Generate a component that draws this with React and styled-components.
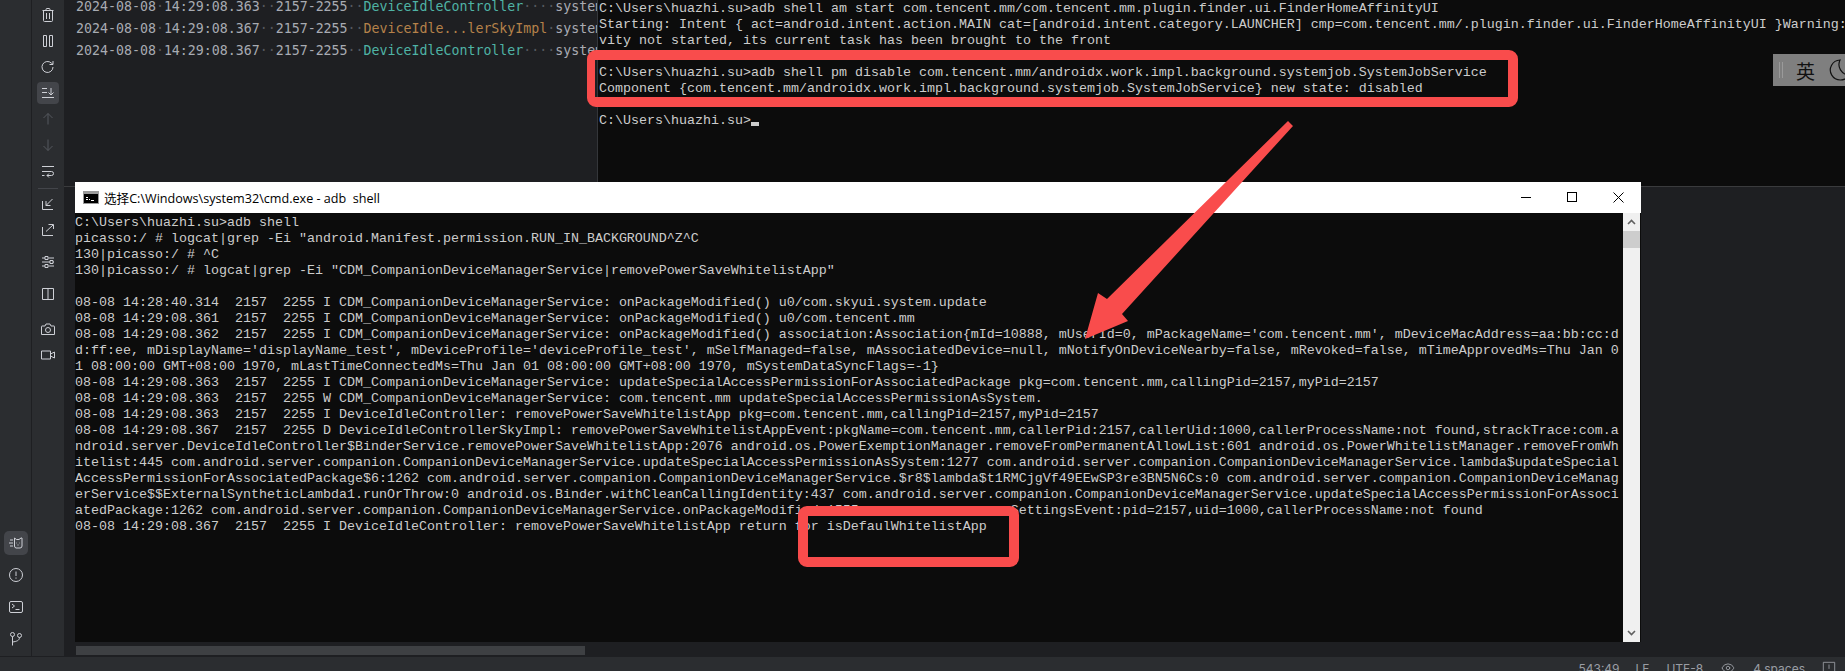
import React from 'react'
import styled, { createGlobalStyle } from 'styled-components'
import { Eye } from 'lucide-react'

const GlobalStyle = createGlobalStyle`
html, body {
  margin: 0;
  padding: 0;
  background: #1e1f22;
  overflow: hidden;
}
`
const Page = styled.div`
position: relative;
width: 1845px;
height: 671px;
display: flex;
flex-direction: column;
overflow: hidden;
background: #1e1f22;
`
const Main = styled.div`
flex: 1;
min-height: 0;
display: flex;
`
const Stripe = styled.div`
width: 31px;
border-right: 1px solid #1e1f22;
background: #2b2d30;
display: flex;
flex-direction: column;
align-items: center;
justify-content: flex-end;
gap: 8px;
padding-bottom: 5px;
`
const StripeButton = styled.div`
width: 24px;
height: 24px;
border-radius: 5px;
display: flex;
align-items: center;
justify-content: center;
background: ${({ $active }) => ($active ? '#43454a' : 'transparent')};
`
const Toolbar = styled.div`
width: 32px;
background: #2b2d30;
display: flex;
flex-direction: column;
align-items: center;
padding-top: 4px;
`
const ToolButton = styled.div`
width: 22px;
height: 22px;
flex: none;
margin-top: ${({ $gap }) => $gap || 0}px;
margin-bottom: 4px;
border-radius: 4px;
display: flex;
align-items: center;
justify-content: center;
background: ${({ $active }) => ($active ? '#43454a' : 'transparent')};
`
const ToolDivider = styled.div`
width: 20px;
height: 1px;
flex: none;
margin: 2px 0 4px;
background: #43454a;
`
const Content = styled.div`
flex: 1;
min-width: 0;
display: flex;
flex-direction: column;
`
const TopRow = styled.div`
height: 187px;
display: flex;
border-bottom: 1px solid #3a3b3d;
box-sizing: border-box;
`
const LogPane = styled.div`
width: 533px;
flex: none;
overflow: hidden;
padding-left: 12px;
box-sizing: border-box;
`
const LogList = styled.div`
margin-top: -4px;
`
const LogRow = styled.div`
height: 22px;
line-height: 22px;
font-family: "DejaVu Sans Mono", monospace;
font-size: 13.28px;
white-space: pre;
color: #a8abb2;
`
const Tag = styled.span`
color: ${({ $debug }) => ($debug ? '#b5824a' : '#4fb3a5')};
`
const Dots = styled.span`
color: #55585e;
`
const TopTerminal = styled.div`
flex: 1;
min-width: 0;
overflow: hidden;
border-left: 1px solid #34363a;
padding: 1px 0 0 1px;
background: #0c0c0c;
`
const TermText = styled.div`
font-family: "Liberation Mono", monospace;
font-size: 13.33px;
line-height: 16px;
color: #cccccc;
white-space: pre;
`
const Caret = styled.span`
display: inline-block;
width: 8px;
height: 4px;
background: #cccccc;
vertical-align: -2px;
`
const HScroll = styled.div`
width: 509px;
height: 9px;
margin: auto 0 1px 12px;
background: #3e4043;
`
const StatusBar = styled.div`
height: 15px;
flex: none;
box-sizing: border-box;
border-top: 1px solid #1e1f22;
background: #2b2d30;
display: flex;
justify-content: flex-end;
align-items: flex-start;
padding: 4px 9px 0 0;
overflow: hidden;
font-family: "Inter", sans-serif;
font-size: 12px;
line-height: 16px;
color: #9a9da4;
`
const StatusItem = styled.span`
margin-right: ${({ $gap }) => $gap}px;
white-space: nowrap;
display: flex;
`
const CmdWindow = styled.div`
position: absolute;
left: 75px;
top: 182px;
width: 1566px;
height: 460px;
display: flex;
flex-direction: column;
background: #0c0c0c;
`
const TitleBar = styled.div`
height: 31px;
flex: none;
background: #ffffff;
display: flex;
align-items: center;
padding-left: 8px;
`
const TitleText = styled.span`
margin-left: 5px;
flex: 1;
font-family: "Open Sans", "Noto Sans CJK SC", sans-serif;
font-size: 12.6px;
color: #000000;
white-space: pre;
`
const WindowButton = styled.div`
width: 46px;
height: 31px;
display: flex;
align-items: center;
justify-content: center;
`
const CmdBody = styled.div`
flex: 1;
min-height: 0;
display: flex;
`
const CmdText = styled(TermText)`
flex: 1;
min-width: 0;
overflow: hidden;
padding-top: 2px;
`
const Track = styled.div`
width: 17px;
margin-right: 1px;
background: #f0f0f0;
display: flex;
flex-direction: column;
align-items: center;
`
const TrackArrow = styled.div`
height: 18px;
flex: none;
display: flex;
align-items: center;
justify-content: center;
`
const Thumb = styled.div`
width: 100%;
height: 17px;
background: #cdcdcd;
margin-bottom: auto;
`
const Callout = styled.div`
position: absolute;
box-sizing: border-box;
border: 10px solid #f94c4c;
border-radius: 9px;
`
const DisableCallout = styled(Callout)`
left: 587px;
top: 50px;
width: 931px;
height: 57px;
border-left-width: 8px;
`
const ResultCallout = styled(Callout)`
left: 798px;
top: 506px;
width: 221px;
height: 61px;
`
const ArrowLayer = styled.svg`
position: absolute;
left: 0;
top: 0;
pointer-events: none;
`
const ImeBar = styled.div`
position: absolute;
left: 1773px;
top: 54px;
width: 72px;
height: 32px;
background: #7f7f7f;
display: flex;
align-items: center;
overflow: hidden;
padding-left: 6px;
box-sizing: border-box;
`
const ImeGrip = styled.div`
width: 2px;
height: 16px;
border-left: 1px solid #9a9a9a;
border-right: 1px solid #9a9a9a;
flex: none;
`
const ImeGlyph = styled.span`
margin: 0 12px 0 13px;
flex: none;
font-family: "Noto Sans CJK SC", sans-serif;
font-size: 19px;
color: #111111;
`
const ImeMoon = styled.svg`
flex: none;
`

const Ico = ({ d, color = '#ced0d6', size = 16 }) => (
  <svg width={size} height={size} viewBox="0 0 16 16" fill="none" stroke={color} strokeWidth="1">
    <path d={d} />
  </svg>
)

const TOOLS = [
  { d: 'M2.5 3.5h11M6 3.5v-1a1 1 0 0 1 1-1h2a1 1 0 0 1 1 1v1M3.5 3.5v10a1 1 0 0 0 1 1h7a1 1 0 0 0 1-1v-10M6.5 6v6M9.5 6v6' },
  { d: 'M3.5 2.5h3v11h-3zM9.5 2.5h3v11h-3z' },
  { d: 'M13 8a5.5 5.5 0 1 1-1.6-3.9L13 5.5M13 2v3.5H9.5' },
  { d: 'M2 3.5h5M2 7.5h5M2 12.5h12M11 3v7M8.5 7.5 11 10l2.5-2.5', active: true },
  { d: 'M8 13.5v-11M3.5 7 8 2.5 12.5 7', off: true },
  { d: 'M8 2.5v11M3.5 9 8 13.5 12.5 9', off: true },
  { d: 'M2 3.5h12M2 8.5h9.5a2 2 0 0 1 0 4H7M2 12.5h2.5M9 10.5l-2 2 2 2' },
  { divider: true },
  { d: 'M2.5 5v8.5H13M12.5 3 6 9.5M6 5v4.5h4.5' },
  { d: 'M2.5 5v8.5H13M6 9.5 13 3M8.5 2.5h5V7' },
  { gap: 6, d: 'M2 4h3M8.5 4H14M2 8h8M13 8h1M2 12h3M8.5 12H14M5 2.5h3v3H5zM10 6.5h3v3h-3zM5 10.5h3v3H5z' },
  { gap: 6, d: 'M2.5 2.5h11v11h-11zM8 2.5v11' },
  { gap: 9, d: 'M2 5h3l1-2h4l1 2h3a.5.5 0 0 1 .5.5v8H1.5v-8A.5.5 0 0 1 2 5zM10.5 9a2.5 2.5 0 1 1-5 0 2.5 2.5 0 0 1 5 0z' },
  { d: 'M1.5 4h9v8h-9zM10.5 7l4-2v6l-4-2' },
]

const LOG_ROWS = [
  { time: '14:29:08.363', tag: 'DeviceIdleController', tail: '····' },
  { time: '14:29:08.367', tag: 'DeviceIdle...lerSkyImpl', tail: '·', debug: true },
  { time: '14:29:08.367', tag: 'DeviceIdleController', tail: '····' },
]

const TOP_LINES = [
  'C:\\Users\\huazhi.su>adb shell am start com.tencent.mm/com.tencent.mm.plugin.finder.ui.FinderHomeAffinityUI',
  'Starting: Intent { act=android.intent.action.MAIN cat=[android.intent.category.LAUNCHER] cmp=com.tencent.mm/.plugin.finder.ui.FinderHomeAffinityUI }Warning: Acti',
  'vity not started, its current task has been brought to the front',
  ' ',
  'C:\\Users\\huazhi.su>adb shell pm disable com.tencent.mm/androidx.work.impl.background.systemjob.SystemJobService',
  'Component {com.tencent.mm/androidx.work.impl.background.systemjob.SystemJobService} new state: disabled',
  ' ',
]

const P = '08-08 14:29:08.'
const CDM = 'CDM_CompanionDeviceManagerService:'

const CMD_LINES = [
  'C:\\Users\\huazhi.su>adb shell',
  'picasso:/ # logcat|grep -Ei "android.Manifest.permission.RUN_IN_BACKGROUND^Z^C',
  '130|picasso:/ # ^C',
  '130|picasso:/ # logcat|grep -Ei "CDM_CompanionDeviceManagerService|removePowerSaveWhitelistApp"',
  ' ',
  `08-08 14:28:40.314  2157  2255 I ${CDM} onPackageModified() u0/com.skyui.system.update`,
  `${P}361  2157  2255 I ${CDM} onPackageModified() u0/com.tencent.mm`,
  `${P}362  2157  2255 I ${CDM} onPackageModified() association:Association{mId=10888, mUserId=0, mPackageName='com.tencent.mm', mDeviceMacAddress=aa:bb:cc:d`,
  "d:ff:ee, mDisplayName='displayName_test', mDeviceProfile='deviceProfile_test', mSelfManaged=false, mAssociatedDevice=null, mNotifyOnDeviceNearby=false, mRevoked=false, mTimeApprovedMs=Thu Jan 0",
  '1 08:00:00 GMT+08:00 1970, mLastTimeConnectedMs=Thu Jan 01 08:00:00 GMT+08:00 1970, mSystemDataSyncFlags=-1}',
  `${P}363  2157  2255 I ${CDM} updateSpecialAccessPermissionForAssociatedPackage pkg=com.tencent.mm,callingPid=2157,myPid=2157`,
  `${P}363  2157  2255 W ${CDM} com.tencent.mm updateSpecialAccessPermissionAsSystem.`,
  `${P}363  2157  2255 I DeviceIdleController: removePowerSaveWhitelistApp pkg=com.tencent.mm,callingPid=2157,myPid=2157`,
  `${P}367  2157  2255 D DeviceIdleControllerSkyImpl: removePowerSaveWhitelistAppEvent:pkgName=com.tencent.mm,callerPid:2157,callerUid:1000,callerProcessName:not found,strackTrace:com.a`,
  'ndroid.server.DeviceIdleController$BinderService.removePowerSaveWhitelistApp:2076 android.os.PowerExemptionManager.removeFromPermanentAllowList:601 android.os.PowerWhitelistManager.removeFromWh',
  'itelist:445 com.android.server.companion.CompanionDeviceManagerService.updateSpecialAccessPermissionAsSystem:1277 com.android.server.companion.CompanionDeviceManagerService.lambda$updateSpecial',
  'AccessPermissionForAssociatedPackage$6:1262 com.android.server.companion.CompanionDeviceManagerService.$r8$lambda$t1RMCjgVf49EEwSP3re3BN5N6Cs:0 com.android.server.companion.CompanionDeviceManag',
  'erService$$ExternalSyntheticLambda1.runOrThrow:0 android.os.Binder.withCleanCallingIdentity:437 com.android.server.companion.CompanionDeviceManagerService.updateSpecialAccessPermissionForAssoci',
  'atedPackage:1262 com.android.server.companion.CompanionDeviceManagerService.onPackageModified:1555                   SettingsEvent:pid=2157,uid=1000,callerProcessName:not found',
  `${P}367  2157  2255 I DeviceIdleController: removePowerSaveWhitelistApp return for isDefaulWhitelistApp`,
]

const CmdIcon = () => (
  <svg width="16" height="13" viewBox="0 0 16 13">
    <rect width="16" height="13" fill="#9a9a9a" />
    <rect x="1" y="3" width="14" height="9" fill="#000000" />
    <path d="M3 6h2v1H3zM3 8h2v1H3zM6 8h1v1H6zM8 9h3v1H8z" fill="#ffffff" />
  </svg>
)

const App = () => {
  return (
    <Page>
      <GlobalStyle />
      <Main>
        <Stripe>
          <StripeButton $active>
            <Ico d="M2 5h3M1 8h4M2 11h3M6.5 3l2 1.5h2.5L13 3l1 0v8a2 2 0 0 1-2 2H8a2 2 0 0 1-1.5-2zM8.5 8h.5M11 8h.5M9.5 10h1" />
          </StripeButton>
          <StripeButton>
            <Ico d="M14.5 8a6.5 6.5 0 1 1-13 0 6.5 6.5 0 0 1 13 0zM8 4.500v4.500M8 10.500v1.200" />
          </StripeButton>
          <StripeButton>
            <Ico d="M3 2.5h10a1.5 1.5 0 0 1 1.5 1.5v8a1.5 1.5 0 0 1-1.5 1.500H3A1.5 1.5 0 0 1 1.5 12V4A1.5 1.5 0 0 1 3 2.500zM4 5l2.5 2L4 9M7.5 10.500h4" />
          </StripeButton>
          <StripeButton>
            <Ico d="M6.5 3.5a2 2 0 1 1-4 0 2 2 0 0 1 4 0zM13.5 4.500a2 2 0 1 1-4 0 2 2 0 0 1 4 0zM4.500 5.500v9M11.500 6.500c0 3-3 4-7 4.500" />
          </StripeButton>
        </Stripe>
        <Toolbar>
          {TOOLS.map((tool, i) =>
            tool.divider ? (
              <ToolDivider key={i} />
            ) : (
              <ToolButton key={i} $active={tool.active} $gap={tool.gap}>
                <Ico d={tool.d} color={tool.off ? '#55585e' : '#ced0d6'} />
              </ToolButton>
            )
          )}
        </Toolbar>
        <Content>
          <TopRow>
            <LogPane>
              <LogList>
                {LOG_ROWS.map((row, i) => (
                  <LogRow key={i}>
                    2024-08-08<Dots>·</Dots>{row.time}<Dots>··</Dots>2157-2255<Dots>··</Dots>
                    <Tag $debug={row.debug}>{row.tag}</Tag>
                    <Dots>{row.tail}</Dots>system
                  </LogRow>
                ))}
              </LogList>
            </LogPane>
            <TopTerminal>
              {TOP_LINES.map((line, i) => (
                <TermText key={i}>{line}</TermText>
              ))}
              <TermText>C:\Users\huazhi.su&gt;<Caret /></TermText>
            </TopTerminal>
          </TopRow>
          <HScroll />
        </Content>
      </Main>
      <StatusBar>
        <StatusItem $gap={16}>543:49</StatusItem>
        <StatusItem $gap={17}>LF</StatusItem>
        <StatusItem $gap={18}>UTF-8</StatusItem>
        <StatusItem $gap={18}><Eye size={14} strokeWidth={1.6} /></StatusItem>
        <StatusItem $gap={17}>4 spaces</StatusItem>
        <StatusItem $gap={0}><Ico size={14} color="#9a9da4" d="M1.5 1.5h13v13h-13zM8 4v5" /></StatusItem>
      </StatusBar>

      <ImeBar>
        <ImeGrip />
        <ImeGlyph>英</ImeGlyph>
        <ImeMoon width="24" height="24" viewBox="0 0 24 24" fill="none" stroke="#111111" strokeWidth="1.2">
          <path d="M13 2a10 10 0 1 0 9 15A10.500 10.500 0 0 1 13 2z" />
        </ImeMoon>
      </ImeBar>

      <CmdWindow>
        <TitleBar>
          <CmdIcon />
          <TitleText>选择C:\Windows\system32\cmd.exe - adb  shell</TitleText>
          <WindowButton>
            <svg width="11" height="11" viewBox="0 0 11 11"><path d="M0 5.5h10" stroke="#000" /></svg>
          </WindowButton>
          <WindowButton>
            <svg width="11" height="11" viewBox="0 0 11 11" fill="none"><rect x=".5" y=".5" width="9" height="9" stroke="#000" /></svg>
          </WindowButton>
          <WindowButton>
            <svg width="11" height="11" viewBox="0 0 11 11"><path d="M.5.5l10 10M10.5.5l-10 10" stroke="#000" /></svg>
          </WindowButton>
        </TitleBar>
        <CmdBody>
          <CmdText>
            {CMD_LINES.map((line, i) => (
              <div key={i}>{line}</div>
            ))}
          </CmdText>
          <Track>
            <TrackArrow>
              <svg width="9" height="6" viewBox="0 0 9 6"><path d="M1 5l3.5-3.5L8 5" fill="none" stroke="#606060" strokeWidth="1.6" /></svg>
            </TrackArrow>
            <Thumb />
            <TrackArrow>
              <svg width="9" height="6" viewBox="0 0 9 6"><path d="M1 1l3.5 3.5L8 1" fill="none" stroke="#606060" strokeWidth="1.6" /></svg>
            </TrackArrow>
          </Track>
        </CmdBody>
      </CmdWindow>

      <DisableCallout />
      <ResultCallout />
      <ArrowLayer width="1845" height="671" viewBox="0 0 1845 671">
        <polygon points="1288,121 1293,126 1122,314 1128,321 1085,339 1098,293 1107,299" fill="#f94c4c" />
      </ArrowLayer>
    </Page>
  )
}

export default App
